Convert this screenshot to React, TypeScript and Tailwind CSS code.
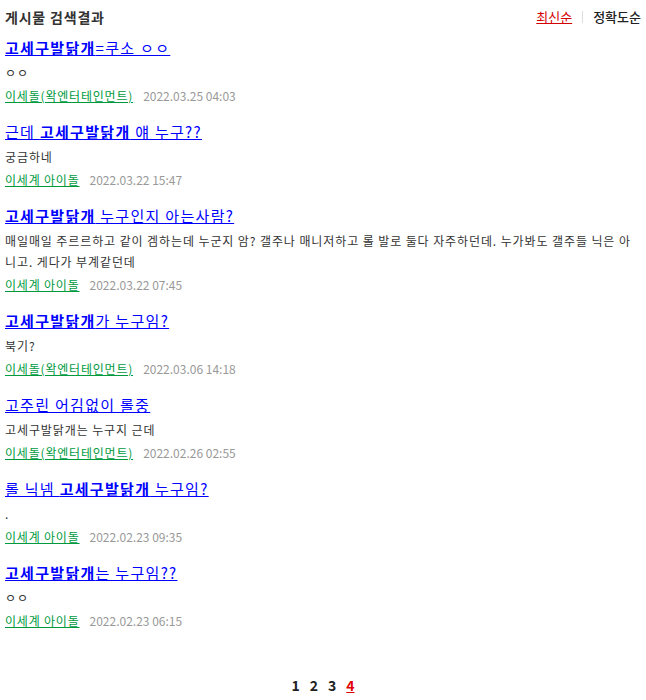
import React from 'react';

interface Post {
  id: number;
  title: React.ReactNode;
  body: string;
  author: string;
  date: string;
}

const KW = <b className="font-semibold">고세구발닭개</b>;

const POSTS: Post[] = [
  { id: 1, title: <>{KW}=쿠소 ㅇㅇ</>, body: 'ㅇㅇ', author: '이세돌(왁엔터테인먼트)', date: '2022.03.25 04:03' },
  { id: 2, title: <>근데 {KW} 얘 누구??</>, body: '궁금하네', author: '이세계 아이돌', date: '2022.03.22 15:47' },
  {
    id: 3,
    title: <>{KW} 누구인지 아는사람?</>,
    body: '매일매일 주르르하고 같이 겜하는데 누군지 암? 갤주나 매니저하고 롤 발로 둘다 자주하던데. 누가봐도 갤주들 닉은 아니고. 게다가 부계같던데',
    author: '이세계 아이돌',
    date: '2022.03.22 07:45',
  },
  { id: 4, title: <>{KW}가 누구임?</>, body: '북기?', author: '이세돌(왁엔터테인먼트)', date: '2022.03.06 14:18' },
  { id: 5, title: <>고주린 어김없이 롤중</>, body: '고세구발닭개는 누구지 근데', author: '이세돌(왁엔터테인먼트)', date: '2022.02.26 02:55' },
  { id: 6, title: <>롤 닉넴 {KW} 누구임?</>, body: '.', author: '이세계 아이돌', date: '2022.02.23 09:35' },
  { id: 7, title: <>{KW}는 누구임??</>, body: 'ㅇㅇ', author: '이세계 아이돌', date: '2022.02.23 06:15' },
];

export default function App() {
  return (
    <div className="w-[646px] min-h-[700px] bg-white px-[5px] text-[#333] font-['Noto_Sans_CJK_KR',sans-serif]">
      {/* header */}
      <div className="flex items-center justify-between pt-[7px] h-[27px]">
        <h2 className="text-[14px] leading-[20px] font-bold tracking-[0.8px] text-[#333]">게시물 검색결과</h2>
        <div className="flex items-center text-[13px] leading-[20px]">
          <a href="#" className="text-[#d40000] underline">최신순</a>
          <span className="mx-[10px] h-[12px] w-px bg-[#ddd]" />
          <a href="#" className="text-[#222] font-medium">정확도순</a>
        </div>
      </div>

      {/* results */}
      <ul className="mt-[10px]">
        {POSTS.map(post => (
          <li key={post.id} className="mb-[14px] flex flex-col">
            <a href="#" className="self-start text-[15px] leading-[22px] tracking-[1.3px] text-[#0000ff] underline font-normal">
              {post.title}
            </a>
            <p className="mt-[3px] text-[12px] leading-[21px] tracking-[0.9px] text-[#333] break-all">{post.body}</p>
            <div className="mt-[2px] flex items-center text-[12px] leading-[22px]">
              <a href="#" className="text-[#009a3e] underline tracking-[0.8px]">{post.author}</a>
              <span className="ml-[10px] text-[#999]">{post.date}</span>
            </div>
          </li>
        ))}
      </ul>

      {/* pagination */}
      <div className="mt-[43px] flex justify-center gap-[8px] text-[14px] leading-[20px] font-semibold text-[#222]">
        <a href="#" className="px-[1px]">1</a>
        <a href="#" className="px-[1px]">2</a>
        <a href="#" className="px-[1px]">3</a>
        <a href="#" className="px-[1px] text-[#e00000] underline">4</a>
      </div>
    </div>
  );
}
